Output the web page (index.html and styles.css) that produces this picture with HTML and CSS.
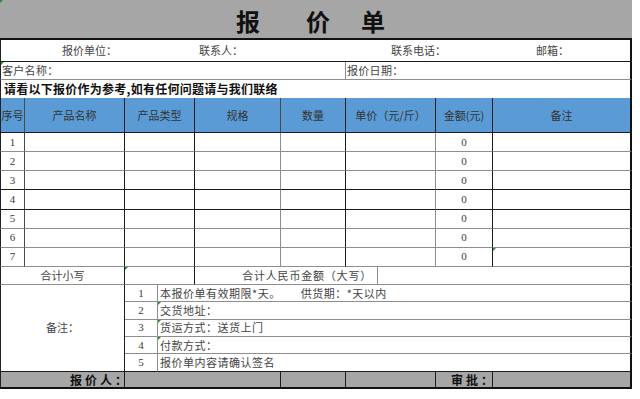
FILE: index.html
```html
<!DOCTYPE html>
<html lang="zh-CN">
<head>
<meta charset="utf-8">
<title>报价单</title>
<link rel="stylesheet" href="styles.css">
</head>
<body>
<table class="sheet">
  <colgroup>
    <col class="c1"><col class="c2"><col class="c3"><col class="c4"><col class="c5">
    <col class="c6"><col class="c7"><col class="c8"><col class="c9"><col class="c10">
  </colgroup>
  <tbody>
    <tr class="r-title">
      <td colspan="10" class="title mk"><span class="t1">报</span><span class="t2">价</span><span class="t3">单</span></td>
    </tr>
    <tr class="r-info">
      <td colspan="10" class="first end hk info">
        <div class="info-grid"><span>报价单位：</span><span>联系人：</span><span>联系电话：</span><span>邮箱：</span></div>
      </td>
    </tr>
    <tr class="r-cust">
      <td colspan="6" class="first mk cust">客户名称：</td>
      <td colspan="4" class="end cust">报价日期：</td>
    </tr>
    <tr class="r-note">
      <td colspan="10" class="first end nob notice">请看以下报价作为参考,如有任何问题请与我们联络</td>
    </tr>
    <tr class="r-head">
      <td class="first vd hk">序号</td>
      <td class="vk hk">产品名称</td>
      <td colspan="2" class="vk hk">产品类型</td>
      <td class="vd hk">规格</td>
      <td class="vk hk">数量</td>
      <td colspan="2" class="vk hk">单价（元/斤）</td>
      <td class="vk hk">金额(元)</td>
      <td class="end hk">备注</td>
    </tr>
    <tr class="r-data">
      <td class="first vd num">1</td><td class="vk"></td><td colspan="2" class="vk"></td><td></td><td class="vk"></td><td colspan="2"></td><td class="vk num">0</td><td class="end"></td>
    </tr>
    <tr class="r-data">
      <td class="first vd num">2</td><td class="vk"></td><td colspan="2" class="vk"></td><td></td><td class="vk"></td><td colspan="2"></td><td class="vk num">0</td><td class="end"></td>
    </tr>
    <tr class="r-data">
      <td class="first vd num hk">3</td><td class="vk hk"></td><td colspan="2" class="vk hk"></td><td class="hk"></td><td class="vk hk"></td><td colspan="2" class="hk"></td><td class="vk num hk">0</td><td class="end hk"></td>
    </tr>
    <tr class="r-data">
      <td class="first vd num hk">4</td><td class="vk hk"></td><td colspan="2" class="vk hk"></td><td class="hk"></td><td class="vk hk"></td><td colspan="2" class="hk"></td><td class="vk num hk">0</td><td class="end hk"></td>
    </tr>
    <tr class="r-data">
      <td class="first vd num">5</td><td class="vk"></td><td colspan="2" class="vk"></td><td></td><td class="vk"></td><td colspan="2"></td><td class="vk num">0</td><td class="end"></td>
    </tr>
    <tr class="r-data">
      <td class="first vd num">6</td><td class="vk"></td><td colspan="2" class="vk"></td><td></td><td class="vk"></td><td colspan="2"></td><td class="vk num">0</td><td class="end"></td>
    </tr>
    <tr class="r-data">
      <td class="first vd num">7</td><td class="vk"></td><td colspan="2" class="vk"></td><td></td><td class="vk"></td><td colspan="2"></td><td class="vk num">0</td><td class="end mk"></td>
    </tr>
    <tr class="r-total">
      <td colspan="2" class="first vk ctr">合计小写</td>
      <td colspan="2" class="vk mk"></td>
      <td colspan="3" class="ctr rmb">合计人民币金额（大写）</td>
      <td colspan="3" class="end"></td>
    </tr>
    <tr class="r-notes">
      <td colspan="2" rowspan="5" class="first vk hk ctr">备注：</td>
      <td class="num">1</td>
      <td colspan="7" class="end txt">本报价单有效期限*天。<span class="gap">供货期：*天以内</span></td>
    </tr>
    <tr class="r-notes">
      <td class="num">2</td>
      <td colspan="7" class="end txt mk">交货地址：</td>
    </tr>
    <tr class="r-notes">
      <td class="num">3</td>
      <td colspan="7" class="end txt mk">货运方式：送货上门</td>
    </tr>
    <tr class="r-notes">
      <td class="num">4</td>
      <td colspan="7" class="end txt mk">付款方式：</td>
    </tr>
    <tr class="r-notes">
      <td class="num hk">5</td>
      <td colspan="7" class="end txt hk">报价单内容请确认签名</td>
    </tr>
    <tr class="r-foot">
      <td colspan="2" class="first vk sign">报价人：</td>
      <td colspan="3" class="vk"></td>
      <td class="vk"></td>
      <td colspan="2" class="vk"></td>
      <td class="vk approve">审批：</td>
      <td class="end"></td>
    </tr>
  </tbody>
</table>
</body>
</html>
```

FILE: styles.css
```css
* { box-sizing: border-box; }

html, body {
  margin: 0;
  padding: 0;
  background: #ffffff;
}

body {
  font-family: "Noto Sans CJK SC", "Liberation Serif", sans-serif;
  font-size: 11px;
  color: #3c3c3c;
}

.sheet {
  border-collapse: separate;
  border-spacing: 0;
  table-layout: fixed;
  width: 632px;
}

.c1 { width: 25px; }
.c2 { width: 100px; }
.c3 { width: 33px; }
.c4 { width: 37px; }
.c5 { width: 86px; }
.c6 { width: 65px; }
.c7 { width: 32px; }
.c8 { width: 58px; }
.c9 { width: 57px; }
.c10 { width: 139px; }

td {
  padding: 0;
  border: 0;
  border-right: 1px solid #8e8e8e;
  border-bottom: 1px solid #8e8e8e;
  line-height: 1;
  vertical-align: middle;
  white-space: nowrap;
  text-align: center;
}

/* border variants */
.first { border-left: 1px solid #222; }
.vk { border-right-color: #1c1c1c; }
.vd { border-right-color: #4a4a4a; }
.end { border-right: 2px solid #111; }
.hk { border-bottom-color: #1c1c1c; }
.nob { border-bottom: 0; }

/* excel cell markers */
.mk { position: relative; }
.mk::before {
  content: "";
  position: absolute;
  left: 0;
  top: 0;
  border-top: 3px solid #2e8b2e;
  border-right: 3px solid transparent;
}

/* title */
.r-title td { height: 40px; }
.title {
  background: #a6a6a6;
  border-right: 0;
  border-bottom: 2px solid #111;
  text-align: left;
  padding: 4px 0 0 236px;
  font-size: 24px;
  font-weight: 700;
  color: #111;
}
.title span { display: inline-block; }
.t2 { margin-left: 46px; }
.t3 { margin-left: 31px; }

/* info row */
.r-info td { height: 22px; }
.info { text-align: left; }
.info-grid {
  display: grid;
  grid-template-columns: 137px 192px 145px 1fr;
  padding-left: 61px;
  color: #444;
}

.r-cust td { height: 18px; }
.cust {
  text-align: left;
  padding-left: 1px;
  letter-spacing: 0.3px;
  color: #444;
}

.r-note td { height: 18px; }
.notice {
  text-align: left;
  padding-left: 3px;
  font-size: 12px;
  font-weight: 700;
  color: #111;
  letter-spacing: 0.25px;
}

/* header */
.r-head td {
  height: 35px;
  background: #5b9bd5;
  color: #333;
}

.r-data td { height: 19.14px; }

.num {
  font-family: "Liberation Serif", serif;
  font-size: 11px;
  color: #3a3a3a;
}

.r-total td { height: 18px; }
.ctr { color: #444; }
.rmb {
  text-align: right;
  padding-right: 5px;
  letter-spacing: 0.8px;
}

.r-notes td { height: 17.4px; }
.txt {
  text-align: left;
  padding-left: 2px;
  color: #444;
  letter-spacing: 0.5px;
}
.gap { margin-left: 20px; }

.r-foot td {
  height: 17px;
  background: #a6a6a6;
  border-bottom: 2px solid #111;
}
.sign,
.approve {
  text-align: left;
  font-size: 12px;
  line-height: 13px;
  font-weight: 700;
  color: #111;
  letter-spacing: 3px;
}
.sign { padding-left: 69px; }
.approve { padding-left: 15px; }
```
